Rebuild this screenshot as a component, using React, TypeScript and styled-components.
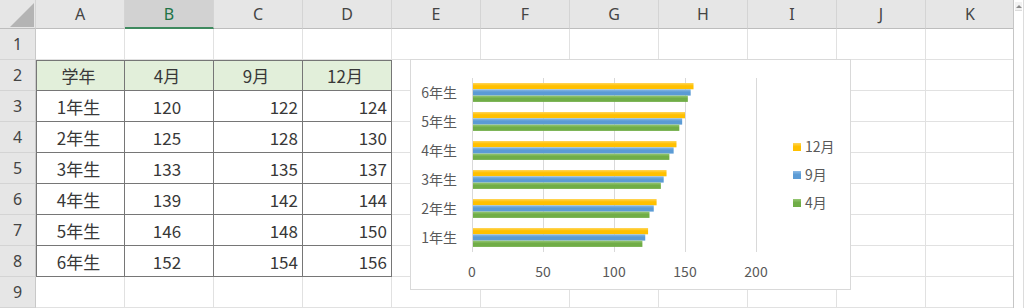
import { Fragment } from "react";
import styled, { createGlobalStyle } from "styled-components";

const GlobalStyle = createGlobalStyle`
  body {
    margin: 0;
    background: #fff;
    font-family: "Noto Sans CJK JP", "Noto Sans", sans-serif;
  }
`;

const COLS = ["A", "B", "C", "D", "E", "F", "G", "H", "I", "J", "K"];
const SELECTED_COL = "B";

const rows = [
  { grade: "1年生", apr: 120, sep: 122, dec: 124 },
  { grade: "2年生", apr: 125, sep: 128, dec: 130 },
  { grade: "3年生", apr: 133, sep: 135, dec: 137 },
  { grade: "4年生", apr: 139, sep: 142, dec: 144 },
  { grade: "5年生", apr: 146, sep: 148, dec: 150 },
  { grade: "6年生", apr: 152, sep: 154, dec: 156 },
];

const Sheet = styled.div`
  position: relative;
  display: flex;
  width: 1024px;
  height: 308px;
  overflow: hidden;
`;

const Grid = styled.div`
  display: grid;
  grid-template-columns: 36px repeat(11, 89px);
  grid-template-rows: 29px repeat(9, 31px);
  width: 1013px;
  flex: none;
  overflow: hidden;
`;

const Corner = styled.div`
  position: relative;
  background: #e6e6e6;
  border-right: 1px solid #d4d4d4;
  border-bottom: 1px solid #bdbdbd;
  box-sizing: border-box;

  &::after {
    content: "";
    position: absolute;
    left: 10px;
    top: 3px;
    width: 24px;
    height: 24px;
    background: #b4b4b4;
    clip-path: polygon(100% 0, 100% 100%, 0 100%);
  }
`;

const ColHeader = styled.div<{ $selected?: boolean }>`
  display: flex;
  align-items: center;
  justify-content: center;
  box-sizing: border-box;
  background: ${(p) => (p.$selected ? "#d2d2d2" : "#e6e6e6")};
  color: ${(p) => (p.$selected ? "#217346" : "#444")};
  border-right: 1px solid #d4d4d4;
  border-bottom: ${(p) => (p.$selected ? "2px solid #3f8a5f" : "1px solid #bdbdbd")};
  font-family: "Noto Sans", sans-serif;
  font-size: 16px;
`;

const RowHeader = styled.div`
  display: flex;
  align-items: center;
  justify-content: center;
  box-sizing: border-box;
  background: #e6e6e6;
  color: #444;
  border-right: 1px solid #c8c8c8;
  border-bottom: 1px solid #d4d4d4;
  font-family: "Noto Sans", sans-serif;
  font-size: 16px;
`;

const Cell = styled.div<{
  $fill?: string;
  $align?: "center" | "right";
  $boxed?: boolean;
  $top?: boolean;
  $left?: boolean;
}>`
  display: flex;
  align-items: center;
  justify-content: ${(p) => (p.$align === "right" ? "flex-end" : "center")};
  box-sizing: border-box;
  padding: 0 4px 0 0;
  background: ${(p) => p.$fill ?? "#fff"};
  color: #383838;
  font-size: 17px;
  border-right: 1px solid ${(p) => (p.$boxed ? "#767676" : "#e1e1e1")};
  border-bottom: 1px solid ${(p) => (p.$boxed ? "#767676" : "#e1e1e1")};
  border-top: ${(p) => (p.$top ? "1px solid #767676" : "none")};
  border-left: ${(p) => (p.$left ? "1px solid #767676" : "none")};
`;

const Scrollbar = styled.div`
  flex: 1;
  display: flex;
  flex-direction: column;
  border-left: 1px solid #c6c6c6;
  border-right: 1px solid #dcdcdc;
  background: #fff;
`;

const ScrollButton = styled.div`
  height: 8px;
  margin: 2px 1px 0;
  background: #f2f2f2;
  border-bottom: 1px solid #dcdcdc;
  display: flex;
  align-items: center;
  justify-content: center;

  &::after {
    content: "";
    border-left: 3px solid transparent;
    border-right: 3px solid transparent;
    border-bottom: 3px solid #8a8a8a;
  }
`;

const ChartBox = styled.div`
  position: absolute;
  left: 410px;
  top: 59px;
  width: 441px;
  height: 231px;
  box-sizing: border-box;
  background: #fff;
  border: 1px solid #d9d9d9;
`;

const ChartText = styled.text`
  font-family: "Noto Sans CJK JP", "Noto Sans", sans-serif;
  font-size: 14px;
  fill: #595959;
`;

const series = [
  { key: "dec", label: "12月", color: "#FFC000", light: "#ffd65c", id: "gY" },
  { key: "sep", label: "9月", color: "#5B9BD5", light: "#8dbbe6", id: "gB" },
  { key: "apr", label: "4月", color: "#70AD47", light: "#96c873", id: "gG" },
] as const;

const X0 = 61;
const SCALE = 71 / 50;
const PLOT_TOP = 18;
const BAND = 29;
const BAR = 6.3;

const BarChart = () => (
  <ChartBox>
    <svg width={439} height={229}>
      <defs>
        {series.map((s) => (
          <linearGradient key={s.id} id={s.id} x1="0" y1="0" x2="0" y2="1">
            <stop offset="0" stopColor={s.light} />
            <stop offset="0.45" stopColor={s.color} />
            <stop offset="1" stopColor={s.color} />
          </linearGradient>
        ))}
      </defs>
      {[0, 50, 100, 150, 200].map((v) => (
        <g key={v}>
          <line
            x1={X0 + v * SCALE + 0.5}
            x2={X0 + v * SCALE + 0.5}
            y1={PLOT_TOP}
            y2={PLOT_TOP + BAND * 6}
            stroke="#d9d9d9"
          />
          <ChartText x={X0 + v * SCALE} y={217} textAnchor="middle">
            {v}
          </ChartText>
        </g>
      ))}
      {rows
        .slice()
        .reverse()
        .map((r, i) => {
          const top = PLOT_TOP + i * BAND;
          return (
            <g key={r.grade}>
              <ChartText x={46} y={top + BAND / 2 + 5} textAnchor="end">
                {r.grade}
              </ChartText>
              {series.map((s, j) => (
                <rect
                  key={s.key}
                  x={X0 + 1}
                  y={top + 5 + j * BAR}
                  width={r[s.key] * SCALE - 1}
                  height={BAR}
                  fill={`url(#${s.id})`}
                />
              ))}
            </g>
          );
        })}
      {series.map((s, i) => (
        <g key={s.label}>
          <rect x={382} y={83 + i * 28} width={8} height={8} fill={`url(#${s.id})`} />
          <ChartText x={394} y={92 + i * 28}>
            {s.label}
          </ChartText>
        </g>
      ))}
    </svg>
  </ChartBox>
);

const BlankRow = ({ n }: { n: number }) => (
  <>
    <RowHeader>{n}</RowHeader>
    {COLS.map((c) => (
      <Cell key={`${c}${n}`} />
    ))}
  </>
);

const App = () => (
  <>
    <GlobalStyle />
    <Sheet>
      <Grid>
        <Corner />
        {COLS.map((c) => (
          <ColHeader key={c} $selected={c === SELECTED_COL}>
            {c}
          </ColHeader>
        ))}

        <BlankRow n={1} />

        <RowHeader>2</RowHeader>
        {["学年", "4月", "9月", "12月"].map((t, i) => (
          <Cell key={t} $fill="#e2efda" $boxed $top $left={i === 0}>
            {t}
          </Cell>
        ))}
        {COLS.slice(4).map((c) => (
          <Cell key={`${c}2`} />
        ))}

        {rows.map((r, i) => (
          <Fragment key={r.grade}>
            <RowHeader>{i + 3}</RowHeader>
            <Cell $boxed $left>
              {r.grade}
            </Cell>
            <Cell $boxed>{r.apr}</Cell>
            <Cell $boxed $align="right">
              {r.sep}
            </Cell>
            <Cell $boxed $align="right">
              {r.dec}
            </Cell>
            {COLS.slice(4).map((c) => (
              <Cell key={`${c}${i + 3}`} />
            ))}
          </Fragment>
        ))}

        <BlankRow n={9} />
      </Grid>
      <Scrollbar>
        <ScrollButton />
      </Scrollbar>
      <BarChart />
    </Sheet>
  </>
);

export default App;
